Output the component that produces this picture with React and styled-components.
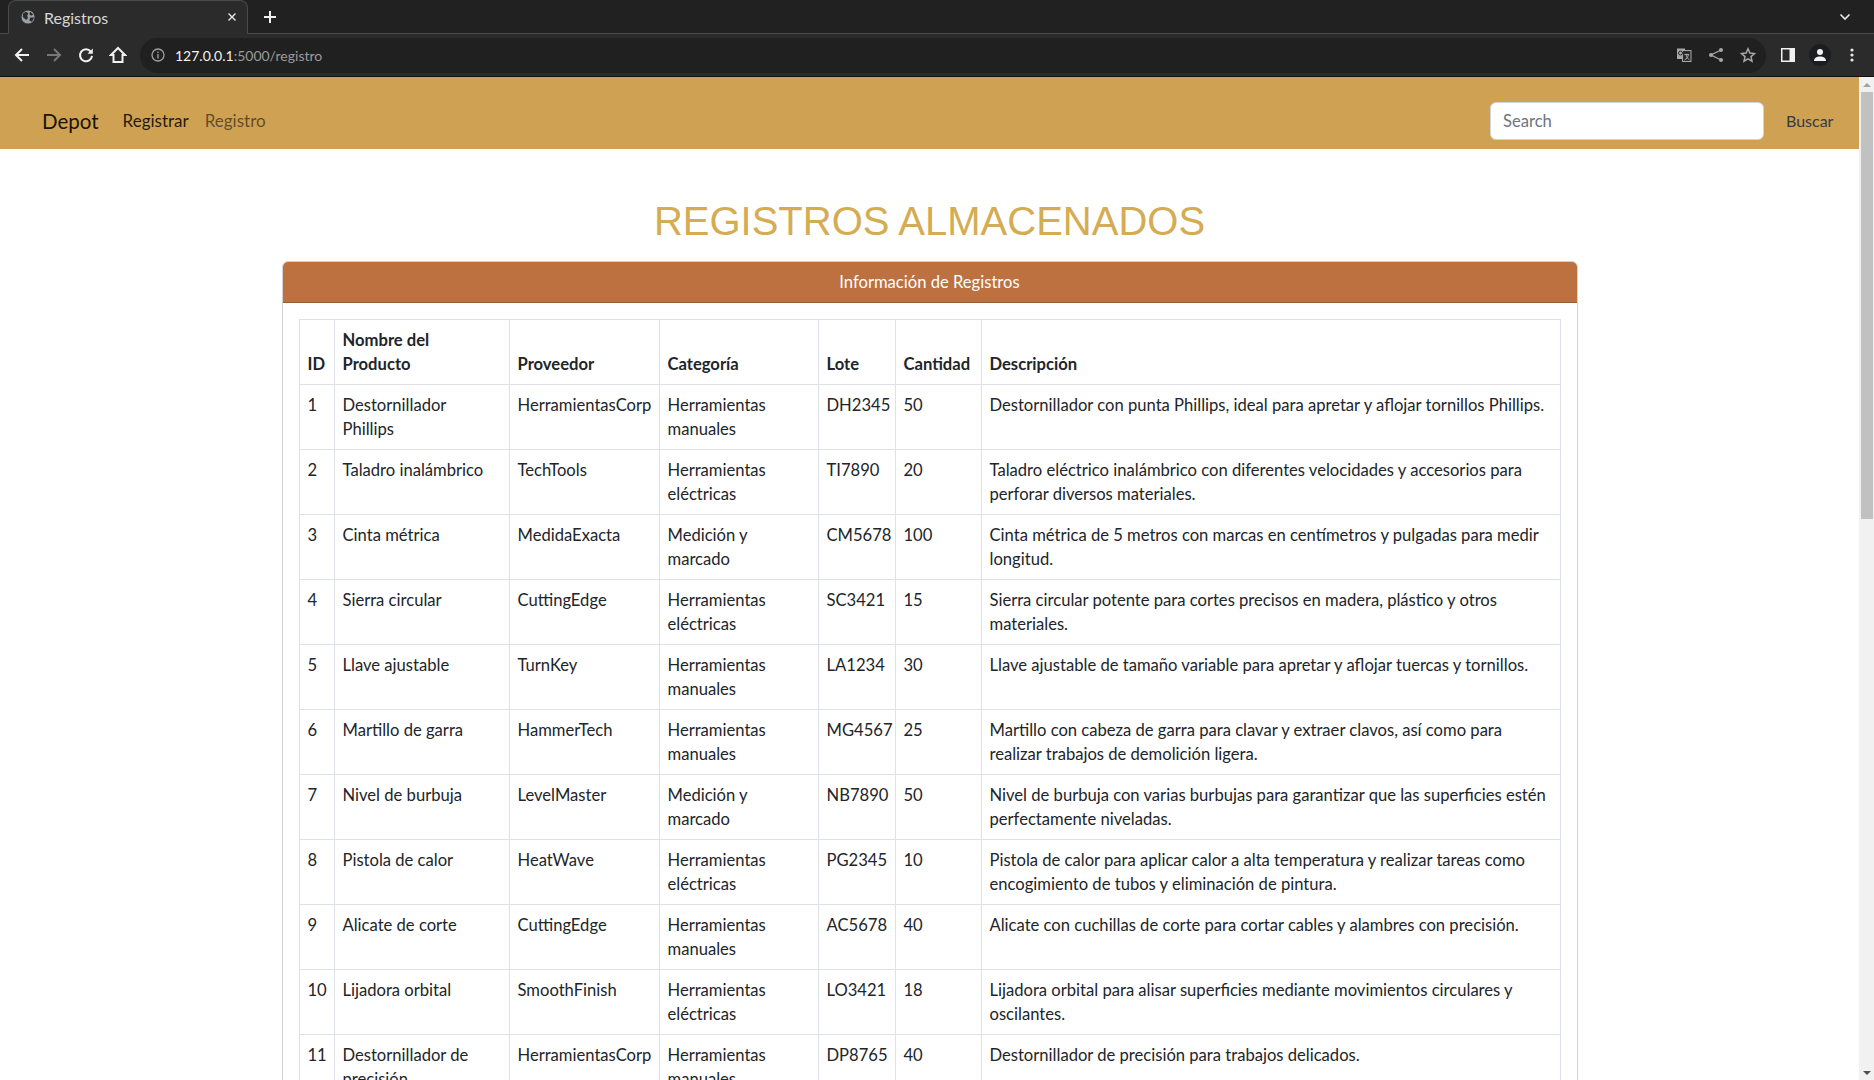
import React from "react";
import styled, { createGlobalStyle } from "styled-components";

const GlobalStyle = createGlobalStyle`
  html, body { margin: 0; padding: 0; height: 100%; overflow: hidden; background: #fff; }
  * { box-sizing: border-box; }
`;

const UI_FONT = `"Lato", "Noto Sans", sans-serif`;

const ROWS = [
  [1, "Destornillador Phillips", "HerramientasCorp", "Herramientas manuales", "DH2345", 50, "Destornillador con punta Phillips, ideal para apretar y aflojar tornillos Phillips."],
  [2, "Taladro inalámbrico", "TechTools", "Herramientas eléctricas", "TI7890", 20, "Taladro eléctrico inalámbrico con diferentes velocidades y accesorios para perforar diversos materiales."],
  [3, "Cinta métrica", "MedidaExacta", "Medición y marcado", "CM5678", 100, "Cinta métrica de 5 metros con marcas en centímetros y pulgadas para medir longitud."],
  [4, "Sierra circular", "CuttingEdge", "Herramientas eléctricas", "SC3421", 15, "Sierra circular potente para cortes precisos en madera, plástico y otros materiales."],
  [5, "Llave ajustable", "TurnKey", "Herramientas manuales", "LA1234", 30, "Llave ajustable de tamaño variable para apretar y aflojar tuercas y tornillos."],
  [6, "Martillo de garra", "HammerTech", "Herramientas manuales", "MG4567", 25, "Martillo con cabeza de garra para clavar y extraer clavos, así como para realizar trabajos de demolición ligera."],
  [7, "Nivel de burbuja", "LevelMaster", "Medición y marcado", "NB7890", 50, "Nivel de burbuja con varias burbujas para garantizar que las superficies estén perfectamente niveladas."],
  [8, "Pistola de calor", "HeatWave", "Herramientas eléctricas", "PG2345", 10, "Pistola de calor para aplicar calor a alta temperatura y realizar tareas como encogimiento de tubos y eliminación de pintura."],
  [9, "Alicate de corte", "CuttingEdge", "Herramientas manuales", "AC5678", 40, "Alicate con cuchillas de corte para cortar cables y alambres con precisión."],
  [10, "Lijadora orbital", "SmoothFinish", "Herramientas eléctricas", "LO3421", 18, "Lijadora orbital para alisar superficies mediante movimientos circulares y oscilantes."],
  [11, "Destornillador de precisión", "HerramientasCorp", "Herramientas manuales", "DP8765", 40, "Destornillador de precisión para trabajos delicados."],
];

const COLUMNS = [
  { label: "ID", width: 35 },
  { label: "Nombre del\nProducto", width: 175 },
  { label: "Proveedor", width: 150 },
  { label: "Categoría", width: 159 },
  { label: "Lote", width: 77 },
  { label: "Cantidad", width: 86 },
  { label: "Descripción", width: 579 },
];

const Shell = styled.div`
  display: flex;
  flex-direction: column;
  height: 100vh;
  overflow: hidden;
`;

const TabStrip = styled.div`
  display: flex;
  align-items: flex-end;
  height: 34px;
  padding-left: 8px;
  background: #212121;
  border-bottom: 1px solid #4a4a4a;
  color: #fff;
`;

const Tab = styled.div`
  display: flex;
  align-items: center;
  width: 240px;
  height: 34px;
  margin-bottom: -1px;
  padding: 0 10px 1px 12px;
  gap: 9px;
  background: #2b2b2b;
  border: 1px solid #4a4a4a;
  border-bottom: none;
  border-radius: 8px 8px 0 0;
`;

const TabTitle = styled.span`
  flex: 1;
  font: 16px ${UI_FONT};
  color: #d6d6d6;
`;

const NewTab = styled.div`
  display: flex;
  margin-left: 16px;
  height: 33px;
  align-items: center;
`;

const TabMenu = styled.div`
  display: flex;
  margin-left: auto;
  margin-right: 23px;
  height: 33px;
  align-items: center;
`;

const Toolbar = styled.div`
  display: flex;
  align-items: center;
  height: 43px;
  padding-left: 13px;
  background: #2b2b2b;
  border-bottom: 1px solid #111;
`;

const NavIcons = styled.div`
  display: flex;
  gap: 14px;
  margin-right: 13px;
`;

const Omnibox = styled.div`
  display: flex;
  align-items: center;
  flex: 1;
  height: 35px;
  padding: 0 10px 0 11px;
  gap: 10px;
  background: #202020;
  border-radius: 18px;
`;

const Url = styled.span`
  flex: 1;
  font: 14px ${UI_FONT};
  color: #9b9b9b;
  b { font-weight: 400; color: #f1f1f1; }
`;

const OmniActions = styled.div`
  display: flex;
  gap: 16px;
`;

const ToolActions = styled.div`
  display: flex;
  align-items: center;
  gap: 14px;
  padding: 0 20px 0 15px;
`;

const Avatar = styled.div`
  display: flex;
  align-items: center;
  justify-content: center;
  width: 22px;
  height: 22px;
  margin-right: 5px;
  border-radius: 50%;
  background: #1c1d22;
`;

const Viewport = styled.div`
  display: flex;
  flex: 1;
  min-height: 0;
`;

const Page = styled.div`
  flex: 1;
  min-width: 0;
  overflow: hidden;
  font: 16.6px/24px ${UI_FONT};
  color: #212529;
`;

const Scrollbar = styled.div`
  display: flex;
  flex-direction: column;
  align-items: center;
  width: 15px;
  background: #f1f1f1;
`;

const ScrollThumb = styled.div`
  width: 12px;
  height: 427px;
  background: #c1c1c1;
`;

const ScrollArrow = styled.div`
  width: 0;
  height: 0;
  margin: ${(p) => (p.$down ? "auto 0 5px" : "6px 0 5px")};
  border-left: 4px solid transparent;
  border-right: 4px solid transparent;
  ${(p) => (p.$down ? "border-top: 4px solid #505050;" : "border-bottom: 4px solid #a3a3a3;")}
`;

const Navbar = styled.nav`
  display: flex;
  align-items: center;
  padding: 25px 24px 9px 42px;
  background: #cfa153;
`;

const Brand = styled.a`
  margin-right: 24px;
  font-size: 20.5px;
  color: rgba(0, 0, 0, 0.9);
`;

const NavLink = styled.a`
  margin-right: 16px;
  font-size: 17px;
  color: ${(p) => (p.$muted ? "rgba(0, 0, 0, 0.55)" : "rgba(0, 0, 0, 0.85)")};
`;

const SearchForm = styled.form`
  display: flex;
  align-items: center;
  gap: 22px;
  margin-left: auto;
`;

const SearchInput = styled.input`
  width: 274px;
  height: 38px;
  padding: 6px 12px;
  border: 1px solid #ced4da;
  border-radius: 6px;
  background: #fff;
  font: 16.6px/24px ${UI_FONT};
  &::placeholder { color: #6c757d; opacity: 1; }
`;

const SearchButton = styled.span`
  width: 49px;
  font-size: 16px;
  color: #343a40;
`;

const Container = styled.main`
  width: 1296px;
  margin: 48px auto 0;
`;

const Title = styled.h1`
  margin: 0 0 16px;
  font: 400 40px/48px "Liberation Sans", Arial, sans-serif;
  text-align: center;
  color: #d4ac52;
`;

const Card = styled.section`
  border: 1px solid rgba(0, 0, 0, 0.175);
  border-radius: 6px;
`;

const CardHeader = styled.header`
  padding: 8px 16px;
  background: #bd7040;
  border-bottom: 1px solid rgba(0, 0, 0, 0.175);
  border-radius: 5px 5px 0 0;
  text-align: center;
  color: #fff;
`;

const CardBody = styled.div`
  padding: 16px;
`;

const Table = styled.table`
  width: 1261px;
  table-layout: fixed;
  border-collapse: collapse;
`;

const Col = styled.col`
  width: ${(p) => p.$width}px;
`;

const HeadCell = styled.th`
  padding: 8px;
  border: 1px solid #dee2e6;
  text-align: left;
  vertical-align: bottom;
  font-weight: 700;
  white-space: pre-line;
`;

const Cell = styled.td`
  padding: 8px;
  border: 1px solid #dee2e6;
  vertical-align: top;
`;

const Globe = () => (
  <svg width="14" height="14" viewBox="0 0 16 16">
    <circle cx="8" cy="8" r="7.5" fill="#9aa0a6" />
    <path d="M2.5 3.5 6 2 8.5 4 7 6.5 8 9 6 11.5 2 8ZM10.5 2 14 5 11.5 6.5 9.5 4.5ZM10.5 8.5 15 8.5 12.5 13.5 9.5 12Z" fill="#2b2b2b" />
  </svg>
);

const Close = () => (
  <svg width="10" height="10" viewBox="0 0 10 10" stroke="#e8e8e8" strokeWidth="1.4">
    <path d="M1.5 1.5 8.5 8.5M8.5 1.5 1.5 8.5" />
  </svg>
);

const Plus = () => (
  <svg width="12" height="12" viewBox="0 0 12 12" stroke="#f1f1f1" strokeWidth="2">
    <path d="M6 0V12M0 6H12" />
  </svg>
);

const Chevron = () => (
  <svg width="12" height="8" viewBox="0 0 12 8" fill="none" stroke="#e8e8e8" strokeWidth="1.6">
    <path d="M1.5 1.5 6 6 10.5 1.5" />
  </svg>
);

const Arrow = ({ color, flip }) => (
  <svg width="18" height="18" viewBox="0 0 18 18" fill="none" stroke={color} strokeWidth="2" style={flip ? { transform: "scaleX(-1)" } : undefined}>
    <path d="M16 9H3.5M9 3 3 9 9 15" />
  </svg>
);

const Reload = () => (
  <svg width="18" height="18" viewBox="0 0 18 18" fill="none">
    <path d="M13.8 5.6A6 6 0 1 0 15 9.8" stroke="#f1f1f1" strokeWidth="2" />
    <path d="M15.8 2.5V7.8H10.5Z" fill="#f1f1f1" />
  </svg>
);

const Home = () => (
  <svg width="18" height="18" viewBox="0 0 18 18" fill="none" stroke="#f1f1f1" strokeWidth="2">
    <path d="M9 2 2 9H4.5V16H13.5V9H16Z" />
  </svg>
);

const Info = () => (
  <svg width="14" height="14" viewBox="0 0 14 14" fill="none" stroke="#a0a0a0" strokeWidth="1.3">
    <circle cx="7" cy="7" r="6" />
    <path d="M7 6V10.5M7 3.5V5" />
  </svg>
);

const Translate = () => (
  <svg width="16" height="16" viewBox="0 0 16 16">
    <rect x="1" y="1.5" width="8" height="10.5" fill="#a8a8a8" />
    <rect x="6.5" y="3.5" width="8.5" height="11" fill="#2b2b2b" stroke="#a8a8a8" />
    <path d="M8.5 7.5H13M10 7.5C10.5 10 12 12 13.5 13M12.5 7.5C12 10 10.5 12 8.5 13" stroke="#a8a8a8" fill="none" />
    <circle cx="4.5" cy="6" r="2" fill="none" stroke="#2b2b2b" />
  </svg>
);

const Share = () => (
  <svg width="16" height="16" viewBox="0 0 16 16" fill="#a8a8a8">
    <path d="M13 3 3 8 13 13" fill="none" stroke="#a8a8a8" strokeWidth="1.3" />
    <circle cx="13" cy="3" r="2" />
    <circle cx="3" cy="8" r="2" />
    <circle cx="13" cy="13" r="2" />
  </svg>
);

const Star = () => (
  <svg width="16" height="16" viewBox="0 0 16 16" fill="none" stroke="#a8a8a8" strokeWidth="1.5">
    <path d="M8 1.8 9.9 6 14.5 6.5 11 9.6 12 14.2 8 11.8 4 14.2 5 9.6 1.5 6.5 6.1 6Z" />
  </svg>
);

const SidePanel = () => (
  <svg width="14" height="14" viewBox="0 0 14 14">
    <rect width="14" height="14" fill="#f1f1f1" />
    <rect x="1.5" y="1.5" width="7" height="11" fill="#2b2b2b" />
  </svg>
);

const Person = () => (
  <svg width="14" height="14" viewBox="0 0 14 14" fill="#f1f1f1">
    <circle cx="7" cy="4" r="3" />
    <path d="M1 13C1 9.8 4 8.5 7 8.5S13 9.8 13 13Z" />
  </svg>
);

const Kebab = () => (
  <svg width="4" height="14" viewBox="0 0 4 14" fill="#e8e8e8">
    <circle cx="2" cy="2" r="1.6" />
    <circle cx="2" cy="7" r="1.6" />
    <circle cx="2" cy="12" r="1.6" />
  </svg>
);

const App = () => (
  <Shell>
    <GlobalStyle />
    <TabStrip>
      <Tab>
        <Globe />
        <TabTitle>Registros</TabTitle>
        <Close />
      </Tab>
      <NewTab><Plus /></NewTab>
      <TabMenu><Chevron /></TabMenu>
    </TabStrip>
    <Toolbar>
      <NavIcons>
        <Arrow color="#f1f1f1" />
        <Arrow color="#777" flip />
        <Reload />
        <Home />
      </NavIcons>
      <Omnibox>
        <Info />
        <Url><b>127.0.0.1</b>:5000/registro</Url>
        <OmniActions>
          <Translate />
          <Share />
          <Star />
        </OmniActions>
      </Omnibox>
      <ToolActions>
        <SidePanel />
        <Avatar><Person /></Avatar>
        <Kebab />
      </ToolActions>
    </Toolbar>
    <Viewport>
      <Page>
        <Navbar>
          <Brand>Depot</Brand>
          <NavLink>Registrar</NavLink>
          <NavLink $muted>Registro</NavLink>
          <SearchForm>
            <SearchInput placeholder="Search" />
            <SearchButton>Buscar</SearchButton>
          </SearchForm>
        </Navbar>
        <Container>
          <Title>REGISTROS ALMACENADOS</Title>
          <Card>
            <CardHeader>Información de Registros</CardHeader>
            <CardBody>
              <Table>
                <colgroup>
                  {COLUMNS.map((c) => <Col key={c.label} $width={c.width} />)}
                </colgroup>
                <thead>
                  <tr>
                    {COLUMNS.map((c) => <HeadCell key={c.label}>{c.label}</HeadCell>)}
                  </tr>
                </thead>
                <tbody>
                  {ROWS.map((row) => (
                    <tr key={row[0]}>
                      {row.map((value, i) => <Cell key={i}>{value}</Cell>)}
                    </tr>
                  ))}
                </tbody>
              </Table>
            </CardBody>
          </Card>
        </Container>
      </Page>
      <Scrollbar>
        <ScrollArrow />
        <ScrollThumb />
        <ScrollArrow $down />
      </Scrollbar>
    </Viewport>
  </Shell>
);

export default App;
